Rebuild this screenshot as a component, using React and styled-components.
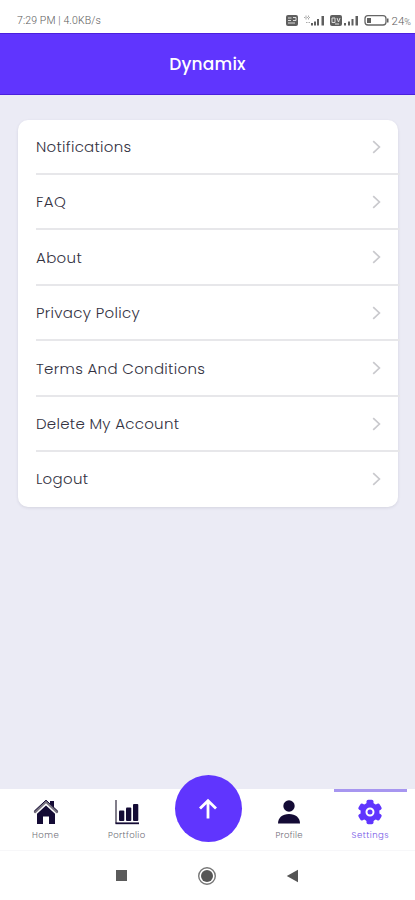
import React from 'react';
import styled, { createGlobalStyle } from 'styled-components';

const GlobalStyle = createGlobalStyle`
    *{
        box-sizing:border-box;
    }
    body{
        margin:0;
        background:#ebebf5;
        font-family:Poppins, Inter, "Liberation Sans", sans-serif;
    }
`
const Screen = styled.div`
    display:flex;
    flex-direction:column;
    width:415px;
    height:900px;
    overflow:hidden;
    background:#ebebf5;
`
const StatusBar = styled.div`
    display:flex;
    flex:none;
    align-items:center;
    justify-content:space-between;
    height:33px;
    padding:9px 4px 0 17px;
    background:#fff;
    color:#5c5c5c;
    font-family:Roboto, sans-serif;
    font-size:10.5px;
    font-weight:300;
    line-height:12px;
    white-space:nowrap;
`
const Clock = styled.span`
    letter-spacing:0.12px;
`
const StatusIcons = styled.div`
    display:flex;
    align-items:center;
    svg{
        display:block;
    }
`
const Battery = styled.span`
    margin-left:3px;
    font-size:11.5px;
    small{
        font-size:9px;
    }
`
const Header = styled.header`
    display:flex;
    flex:none;
    align-items:center;
    justify-content:center;
    height:62px;
    border-top:1px solid #4b20dc;
    border-bottom:1px solid #4b20dc;
    background:#6035fe;
    color:#fff;
`
const Title = styled.h1`
    margin:0;
    font-size:17px;
    font-weight:500;
    line-height:24px;
    letter-spacing:0.2px;
`
const Content = styled.main`
    flex:1;
    padding:25px 17px 0 18px;
`
const Card = styled.ul`
    margin:0;
    padding:0 0 0 18px;
    height:387px;
    list-style:none;
    border-radius:10px;
    background:#fff;
    box-shadow:0 1px 3px rgba(60,60,80,.12);
`
const Row = styled.li`
    display:flex;
    align-items:center;
    justify-content:space-between;
    height:55.4px;
    margin-right:-2px;
    padding:0.5px 19px 0 0;
    border-bottom:${props => props.$last ? 'none' : '2px solid #e7e7ea'};
    color:#33323f;
    font-size:15px;
    font-weight:300;
    &:first-child{
        height:55px;
        padding-top:0;
    }
    &:last-child{
        height:54px;
        padding-top:0;
    }
`
const Label = styled.span`
    letter-spacing:${props => props.$spacing}px;
    white-space:nowrap;
`
const TabBar = styled.nav`
    display:grid;
    flex:none;
    grid-template-columns:repeat(5, 1fr);
    height:62px;
    padding:0 4px 0 5px;
    border-bottom:1px solid #f7f7f9;
    background:#fff;
`
const Tab = styled.div`
    display:flex;
    flex-direction:column;
    align-items:center;
    margin:0 4px;
    padding-top:7px;
    border-top:3px solid ${props => props.$active ? '#a796f0' : 'transparent'};
    color:${props => props.$active ? '#6035fe' : '#140b35'};
    svg{
        display:block;
    }
`
const TabLabel = styled.span`
    margin-top:4px;
    color:${props => props.$active ? '#6f52e6' : '#6f6e78'};
    font-size:8.5px;
    font-weight:300;
    line-height:12px;
    letter-spacing:${props => props.$spacing}px;
`
const SendButton = styled.div`
    display:flex;
    align-items:center;
    justify-content:center;
    justify-self:center;
    width:67px;
    height:67px;
    margin:-14px 0 0 1px;
    border-radius:50%;
    background:#6035fe;
`
const SystemBar = styled.div`
    display:flex;
    flex:none;
    align-items:center;
    justify-content:space-between;
    height:49px;
    padding:0 116px 0 115px;
    background:#fff;
`
const items = [
    { name:'Notifications', spacing:0.27 },
    { name:'FAQ', spacing:0.4 },
    { name:'About', spacing:0.35 },
    { name:'Privacy Policy', spacing:0.32 },
    { name:'Terms And Conditions', spacing:0.31 },
    { name:'Delete My Account', spacing:0.28 },
    { name:'Logout', spacing:0.3 }
]
const Chevron = () => (
    <svg width="9" height="14" viewBox="0 0 9 14" fill="none" stroke="#c9c9cd" strokeWidth="1.7">
        <path d="M1.2 1.2 7.4 7 1.2 12.8" />
    </svg>
)
const HomeIcon = () => (
    <svg width="26" height="26" viewBox="0 0 26 26">
        <path fill="currentColor" d="M17 2h4v7l-4-4zM13 6.5l9 8.2V25h-6v-7.5h-6V25H4V14.7z" />
        <path fill="none" stroke="#77727f" strokeWidth="2.4" strokeLinejoin="round" strokeLinecap="round" d="M2 13 13 2.7 24 13" />
        <path fill="none" stroke="currentColor" strokeWidth="1" d="M1.2 12.2 13 1.2l11.8 11" />
    </svg>
)
const ChartIcon = () => (
    <svg width="26" height="26" viewBox="0 0 26 26">
        <path fill="none" stroke="#625e6d" strokeWidth="1.6" d="M2 1v23.5" />
        <path fill="none" stroke="currentColor" strokeWidth="1.8" d="M1.5 24.3H25" />
        <g fill="currentColor">
            <rect x="5" y="11.5" width="5.3" height="10.5" rx="1" />
            <rect x="12" y="8.5" width="5.3" height="13.5" rx="1" />
            <rect x="19" y="5" width="5.3" height="17" rx="1" />
        </g>
    </svg>
)
const ProfileIcon = () => (
    <svg width="26" height="26" viewBox="0 0 26 26" fill="currentColor">
        <circle cx="13" cy="7" r="5.7" />
        <path d="M2 24.5c0-5.8 4.4-9.5 11-9.5s11 3.7 11 9.5z" />
    </svg>
)
const GearIcon = () => (
    <svg width="26" height="26" viewBox="0 0 26 26" fill="currentColor">
        {
            [0, 60, 120].map(angle => (
                <rect key={angle} x="9.5" y="0.8" width="7" height="24.4" rx="1.8" transform={`rotate(${angle} 13 13)`} />
            ))
        }
        <circle cx="13" cy="13" r="9.5" />
        <circle cx="13" cy="13" r="3.5" fill="none" stroke="#fff" strokeWidth="2" />
    </svg>
)
const ArrowUp = () => (
    <svg width="20" height="22" viewBox="0 0 20 22" fill="none" stroke="#fff" strokeWidth="2.8">
        <path d="M10 20.5V3M2 10.5 10 2.7l8 7.8" />
    </svg>
)
const Signals = () => (
    <svg width="104" height="14" viewBox="284 14 104 14">
        <g fill="#5f5f5f">
            <rect x="285" y="15" width="12" height="11" rx="2" />
            <rect x="329" y="15" width="12" height="11" rx="2" />
            <path d="M310 23h2v2.5h-2zM313 21.5h2v4h-2zM316 19h2v6.5h-2zM320.5 16h2.5v9.5h-2.5z" />
            <path d="M343 23h2v2.5h-2zM347 21.5h2v4h-2zM350.5 19h2v6.5h-2zM354.5 16h2.5v9.5h-2.5z" />
            <path d="M366 18h4v5h-4z" />
            <path d="M386 18.5h1.5v4H386z" />
        </g>
        <g fill="none" stroke="#ddd" strokeWidth="1">
            <path d="M287 18h3.5M287 20.5h3M287 23h7M292 17.5h3v3h-3M331 18h3v4.5h-3zM336 18l1.5 4 1.5-4M334 24h4" />
        </g>
        <g fill="none" stroke="#aaa" strokeWidth="1">
            <path d="M303 17.5h6M305 15.5v4M307.5 15.5v4M305 22.5h4" strokeDasharray="1.5 1" />
        </g>
        <rect x="364" y="15.7" width="21" height="9.3" rx="3" fill="none" stroke="#666" strokeWidth="1.3" />
    </svg>
)
const tabs = [
    { name:'Home', icon:HomeIcon, spacing:0.5 },
    { name:'Portfolio', icon:ChartIcon, spacing:0.4 },
    { name:'send' },
    { name:'Profile', icon:ProfileIcon, spacing:0.3 },
    { name:'Settings', icon:GearIcon, spacing:0.5, active:true }
]
const App = () => (
    <>
        <GlobalStyle />
        <Screen>
            <StatusBar>
                <Clock>7:29 PM | 4.0KB/s</Clock>
                <StatusIcons>
                    <Signals />
                    <Battery>24<small>%</small></Battery>
                </StatusIcons>
            </StatusBar>
            <Header>
                <Title>Dynamix</Title>
            </Header>
            <Content>
                <Card>
                    {
                        items.map((item, index) => (
                            <Row key={item.name} $last={index === items.length - 1}>
                                <Label $spacing={item.spacing}>{item.name}</Label>
                                <Chevron />
                            </Row>
                        ))
                    }
                </Card>
            </Content>
            <TabBar>
                {
                    tabs.map(({ name, icon:TabIcon, spacing, active }) => TabIcon ? (
                        <Tab key={name} $active={active}>
                            <TabIcon />
                            <TabLabel $active={active} $spacing={spacing}>{name}</TabLabel>
                        </Tab>
                    ) : (
                        <SendButton key={name}>
                            <ArrowUp />
                        </SendButton>
                    ))
                }
            </TabBar>
            <SystemBar>
                <svg width="13" height="13" viewBox="0 0 13 13">
                    <rect x="1" y="1" width="11" height="11" fill="#5b5b5b" />
                </svg>
                <svg width="20" height="20" viewBox="0 0 20 20">
                    <circle cx="10" cy="10" r="8.3" fill="none" stroke="#777" strokeWidth="1.4" />
                    <circle cx="10" cy="10" r="6" fill="#555" />
                </svg>
                <svg width="13" height="14" viewBox="0 0 13 14">
                    <path d="M12 .8v12.4L.8 7z" fill="#555" />
                </svg>
            </SystemBar>
        </Screen>
    </>
)
export default App;
